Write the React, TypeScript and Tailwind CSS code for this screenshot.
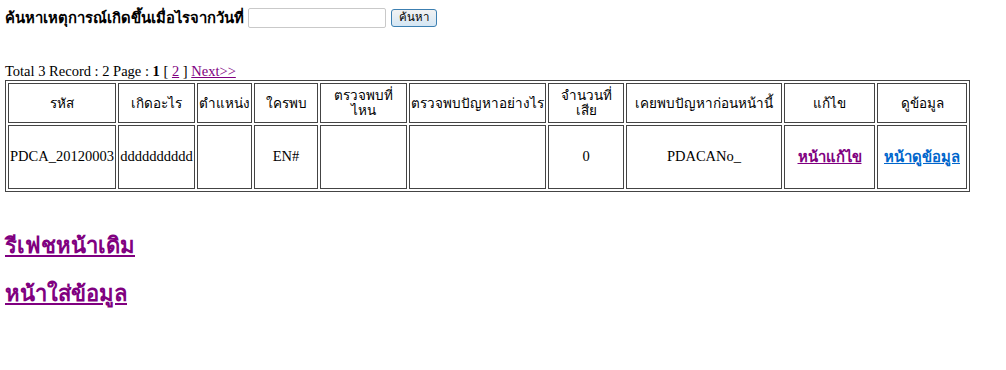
export default function App() {
  const headers = [
    { label: "รหัส", w: "w-[108px]" },
    { label: "เกิดอะไร", w: "w-[77px]" },
    { label: "ตำแหน่ง", w: "w-[55px]" },
    { label: "ใครพบ", w: "w-[64px]" },
    { label: ["ตรวจพบที่", "ไหน"], w: "w-[87px]" },
    { label: "ตรวจพบปัญหาอย่างไร", w: "w-[137px]" },
    { label: ["จำนวนที่", "เสีย"], w: "w-[76px]" },
    { label: "เคยพบปัญหาก่อนหน้านี้", w: "w-[156px]" },
    { label: "แก้ไข", w: "w-[91px]" },
    { label: "ดูข้อมูล", w: "w-[90px]" },
  ];

  const thai = "font-['Tahoma','DejaVu_Sans','Noto_Sans',sans-serif]";
  const cell = "border border-[#444] p-[1px] text-center align-middle";

  return (
    <div className="min-h-[370px] bg-white px-[5px] pt-[8px] text-black font-['Liberation_Serif',serif]">
      <div className="flex items-center h-[20px]">
        <span className={`${thai} text-[14.8px] font-bold leading-none`}>ค้นหาเหตุการณ์เกิดขึ้นเมื่อไรจากวันที่</span>
        <input
          type="text"
          className="ml-[4px] h-[20px] w-[138px] border border-[#c9c9c9] rounded-[2px] bg-white"
        />
        <button className={`${thai} ml-[5px] h-[18px] w-[46px] rounded-[3px] border border-[#3c7fb1] bg-gradient-to-b from-[#f2f2f2] to-[#d4e6f4] text-[11.5px] leading-none`}>
          ค้นหา
        </button>
      </div>

      <div className="mt-[35px] text-[14.5px] leading-[16px]">
        Total 3 Record : 2 Page : <b>1</b> [ <a href="#" className="text-[#800080] underline">2</a> ]{" "}
        <a href="#" className="text-[#800080] underline">Next&gt;&gt;</a>
      </div>

      <table className="mt-[1px] border border-[#444] border-separate border-spacing-[2px] table-fixed w-[965px]">
        <thead>
          <tr className="h-[40px]">
            {headers.map((h, i) => (
              <th key={i} className={`${cell} ${h.w} ${thai} text-[13.5px] font-normal leading-[15px]`}>
                {Array.isArray(h.label) ? (
                  <>
                    {h.label[0]}
                    <br />
                    {h.label[1]}
                  </>
                ) : (
                  h.label
                )}
              </th>
            ))}
          </tr>
        </thead>
        <tbody>
          <tr className="h-[64px] text-[14.5px]">
            <td className={cell}>PDCA_20120003</td>
            <td className={cell}>dddddddddd</td>
            <td className={cell}></td>
            <td className={cell}>EN#</td>
            <td className={cell}></td>
            <td className={cell}></td>
            <td className={cell}>0</td>
            <td className={cell}>PDACANo_</td>
            <td className={cell}>
              <a href="#" className={`${thai} text-[14.8px] font-bold text-[#800080] underline`}>หน้าแก้ไข</a>
            </td>
            <td className={cell}>
              <a href="#" className={`${thai} text-[14.8px] font-bold text-[#0066cc] underline`}>หน้าดูข้อมูล</a>
            </td>
          </tr>
        </tbody>
      </table>

      <div className="mt-[42px] flex flex-col items-start gap-[24px]">
        <a href="#" className={`${thai} text-[22px] font-bold text-[#800080] underline leading-[24px]`}>รีเฟชหน้าเดิม</a>
        <a href="#" className={`${thai} text-[22px] font-bold text-[#800080] underline leading-[24px]`}>หน้าใส่ข้อมูล</a>
      </div>
    </div>
  );
}
